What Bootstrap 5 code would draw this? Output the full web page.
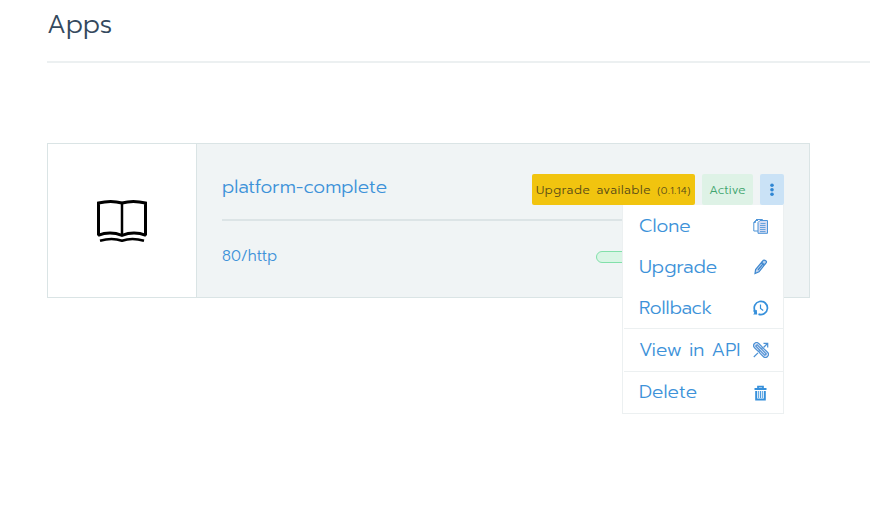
<!DOCTYPE html>
<html lang="en">
<head>
<meta charset="utf-8">
<title>Apps</title>
<meta name="viewport" content="width=device-width, initial-scale=1">
<link href="https://cdn.jsdelivr.net/npm/bootstrap@5.3.0/dist/css/bootstrap.min.css" rel="stylesheet">
<style>
body{font-family:Prompt,Lato,"Open Sans",sans-serif;font-weight:300;color:#34495e;background:#fff}
a{color:#3d92d9;text-decoration:none}
.page-head{margin-left:47px;height:63px;border-bottom:2px solid #ecf0f1}
.page-title{font-size:26px;font-weight:300;line-height:50px;margin:0}
.app-card{margin:80px 0 0 47px;width:763px;height:155px;border:1px solid #dae4e5;background:#f0f4f5}
.app-icon{width:149px;border-right:1px solid #dae4e5}
.app-body{padding:30px 25px 0 25px}
.app-top{height:47px;border-bottom:2px solid #dce4e6}
.app-name{font-size:18.72px;line-height:27px}
.tag{height:31px;line-height:33px;border-radius:2px;font-size:12px;white-space:nowrap}
.tag-upgrade{width:163px;padding-left:4px;background:#f1c40f;color:#574a18;letter-spacing:.6px;word-spacing:1px}
.tag-upgrade small{font-size:10px;letter-spacing:.5px}
.tag-active{width:51px;background:#def2e6;color:#3fa56f;margin-left:7px;letter-spacing:.1px}
.tag-more{width:24px;background:#cae2f6;margin-left:7px}
.port{font-size:15px;line-height:23px}
.scale-bar{width:188px;height:12px;border:1px solid #82e0aa;border-radius:6px;background:#d9f5e5;margin-top:6px}
.app-menu{top:31px;right:0;width:162px;height:209px;padding-left:1px;background:#fff;border:1px solid #ecf0f1;border-top:0;z-index:2}
.app-menu a{height:41px;padding:0 14px 0 15px;font-size:18.72px}
.app-menu a:not(.split) span{padding-top:2px}
.app-menu .split{border-top:1px solid #ecf0f1;height:43px}
.app-menu .last{height:42px}
</style>
<script src="https://cdn.jsdelivr.net/npm/bootstrap@5.3.0/dist/js/bootstrap.bundle.min.js"></script>
</head>
<body class="min-vh-100">
<header class="page-head"><h1 class="page-title">Apps</h1></header>
<main>
<section class="app-card d-flex">
  <div class="app-icon bg-white d-flex flex-shrink-0 align-items-center justify-content-center">
    <svg width="52" height="44" viewBox="0 0 52 44" fill="none" stroke="#000">
      <path d="M2.500 36.500V4Q15 .8 26 4Q37 .8 49.500 4V36.500" stroke-width="3"/>
      <path d="M2 36.300Q14 31.700 26 36.300Q38 31.700 50 36.300" stroke-width="3"/>
      <path d="M26 4V36" stroke-width="2.500"/>
      <path d="M4 41.700Q16 38.300 26 41.700Q36 38.300 48 41.700" stroke-width="2.500"/>
    </svg>
  </div>
  <div class="app-body flex-grow-1">
    <div class="app-top d-flex justify-content-between align-items-start">
      <a class="app-name" href="#">platform-complete</a>
      <div class="d-flex position-relative">
        <span class="tag tag-upgrade">Upgrade available <small>(0.1.14)</small></span>
        <span class="tag tag-active text-center">Active</span>
        <a class="tag tag-more d-flex align-items-center justify-content-center" href="#" aria-label="Actions">
          <svg width="4" height="13" viewBox="0 0 4 13" fill="#2f86d3"><circle cx="2" cy="2.300" r="1.800"/><circle cx="2" cy="6.800" r="1.800"/><circle cx="2" cy="11.200" r="1.800"/></svg>
        </a>
        <nav class="app-menu position-absolute">
          <a class="d-flex align-items-center justify-content-between" href="#"><span>Clone</span>
            <svg width="16" height="16" viewBox="0 0 16 16" fill="none" stroke="#4d94d8"><path d="M5 2.500H2.500L.8 4.500V13H5M2.500 2.500V4.500H.8M3 1.500H9.500V3"/><path fill="#d5dcf2" d="M7 2.500H14.500V15.300H5V4.500Z"/><path d="M7.500 5.500H12.500M7 7.500H12.500M7 9.500H12.500M7 11.500H12.500M7 13.500H12.500" stroke-width=".8"/></svg></a>
          <a class="d-flex align-items-center justify-content-between" href="#"><span>Upgrade</span>
            <svg width="16" height="16" viewBox="0 0 16 16" fill="#bdd3ee" stroke="#3d87cf" stroke-width="1.200"><path d="M2 14.500L2.600 10.500L9 2.800L12 5.200L6 12.800Z"/><path d="M9 2.800L10.300 1.300Q11.500 .9 12.700 1.700T13.300 3.600L12 5.200M8.200 3.800L11.200 6.200M5 11L9.800 5.200"/></svg></a>
          <a class="d-flex align-items-center justify-content-between" href="#"><span>Rollback</span>
            <svg width="16" height="16" viewBox="0 0 16 16" fill="none" stroke="#3690db" stroke-width="1.700"><path d="M2 11A6.600 6.600 0 1 1 5.500 14.100"/><path d="M7.500 4.500V8.500L10.200 10.500" stroke-width="1.200"/><path d="M0 10.500L3.800 10L4.200 14.500H.2L1.300 13Z" fill="#3690db" stroke="none"/></svg></a>
          <a class="split d-flex align-items-center justify-content-between" href="#"><span>View in API</span>
            <svg width="16" height="16" viewBox="0 0 16 16" fill="none" stroke="#4b91d5"><path d="M10.500 5.500L14.500 1.500M10.500 1.300H14.700V5.500M.8 15L5 10.800" stroke-width="1.200"/><g transform="rotate(45 8 8)" stroke-width="1.100"><rect x="-1.200" y="5" width="10.500" height="6" rx="3" fill="#dbe1f3"/><rect x="6.700" y="5" width="10.500" height="6" rx="3" fill="#dbe1f3"/><path d="M1.500 7H14.500V9H1.500Z" fill="#dbe1f3"/></g></svg></a>
          <a class="split last d-flex align-items-center justify-content-between" href="#"><span>Delete</span>
            <svg width="16" height="16" viewBox="0 0 16 16" fill="none" stroke="#3690db"><path d="M1.500 4H13.500" stroke-width="2"/><path d="M5 3.500V1.700H10V3.500" stroke-width="1.700"/><path d="M3.200 6V14.500H11.800V6" stroke-width="2"/><path d="M5.700 6V13M7.500 6V13M9.300 6V13" stroke-width=".9"/></svg></a>
        </nav>
      </div>
    </div>
    <div class="d-flex justify-content-between pt-4">
      <a class="port" href="#">80/http</a>
      <div class="scale-bar"></div>
    </div>
  </div>
</section>
</main>
</body>
</html>
